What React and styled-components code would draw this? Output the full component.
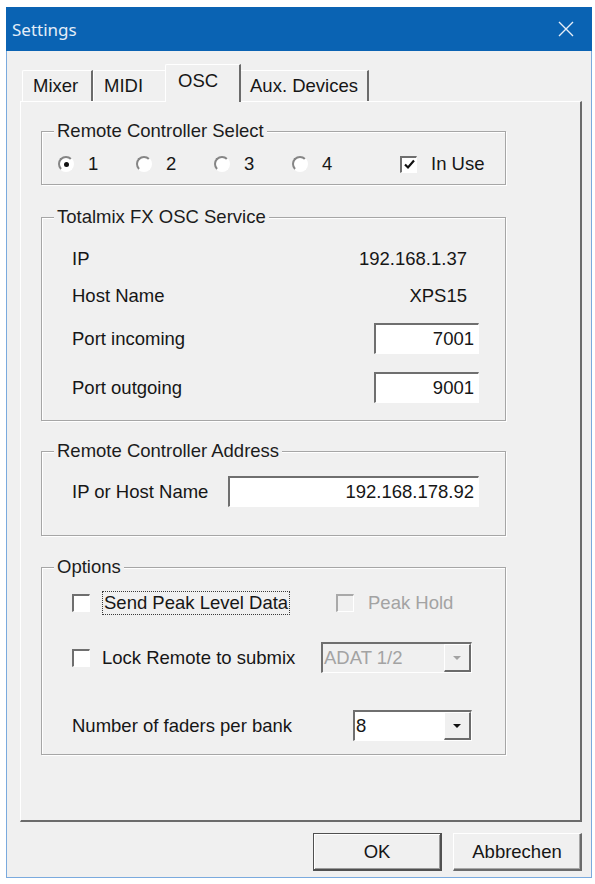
import React from 'react';
import styled, { createGlobalStyle } from 'styled-components';

const GlobalStyle = createGlobalStyle`
  body {
    margin: 0;
    background: #ffffff;
    font-family: 'Liberation Sans', Arial, sans-serif;
    font-size: 18.5px;
    color: #161616;
  }
`;

const Page = styled.div`
  padding: 7px 0 0 6px;
`;

const Window = styled.div`
  box-sizing: border-box;
  width: 586px;
  height: 871px;
  display: flex;
  flex-direction: column;
  background: #f0f0f0;
  border: 1px solid #7aaade;
  border-top: none;
`;

const TitleBar = styled.div`
  height: 44px;
  flex-shrink: 0;
  margin: 0 -1px;
  display: flex;
  align-items: center;
  justify-content: space-between;
  background: #0a63b3;
`;

const Title = styled.span`
  padding-left: 6px;
  font-family: 'Noto Sans', 'Open Sans', sans-serif;
  font-size: 17px;
  color: #e4edf8;
`;

const CloseButton = styled.div`
  width: 50px;
  height: 44px;
  margin-right: 1px;
  display: flex;
  align-items: center;
  justify-content: center;
`;

const TabStrip = styled.div`
  height: 37px;
  flex-shrink: 0;
  margin: 13px 0 0 13px;
  padding-left: 2px;
  display: flex;
  align-items: flex-end;
`;

const Tab = styled.div`
  box-sizing: border-box;
  position: relative;
  width: ${p => p.$width}px;
  height: ${p => (p.$active ? 38 : 31)}px;
  margin: 0 ${p => (p.$active ? -2 : 0)}px ${p => (p.$active ? -1 : 0)}px ${p => (p.$active ? -2 : 0)}px;
  padding: ${p => (p.$active ? '6px 0 0 12px' : '0 0 0 10px')};
  display: flex;
  align-items: ${p => (p.$active ? 'flex-start' : 'center')};
  line-height: 20px;
  background: #f0f0f0;
  border-top: 1px solid #ffffff;
  border-left: 1px solid #ffffff;
  border-right: 2px solid #6b6b6b;
  border-top-left-radius: 2px;
  z-index: ${p => (p.$active ? 1 : 0)};
`;

const Panel = styled.div`
  box-sizing: border-box;
  width: 562px;
  height: 721px;
  flex-shrink: 0;
  margin-left: 13px;
  padding: 19px 0 0 20px;
  border-top: 1px solid #ffffff;
  border-left: 1px solid #ffffff;
  border-right: 2px solid #6b6b6b;
  border-bottom: 2px solid #6b6b6b;
`;

const Group = styled.fieldset`
  box-sizing: border-box;
  width: 465px;
  min-width: 0;
  margin: ${p => p.$top || 0}px 0 0 0;
  padding: 0;
  border: 1px solid #a6a6a6;
  box-shadow: 1px 1px 0 #ffffff, inset 1px 1px 0 #ffffff;
`;

const Legend = styled.legend`
  margin-left: 12px;
  padding: 0 3px;
  line-height: 20px;
  background: #f0f0f0;
  color: #1c1c1c;
`;

const GroupBody = styled.div`
  padding: ${p => p.$pad};
`;

const RadioRow = styled.div`
  height: 20px;
  display: flex;
  align-items: center;
  line-height: 20px;
`;

const RadioItem = styled.label`
  width: 78px;
  display: flex;
  align-items: center;
  gap: 14px;
`;

const RadioDot = styled.span`
  box-sizing: border-box;
  width: 16px;
  height: 16px;
  border-radius: 50%;
  border: 2px solid;
  border-color: #858585 #ffffff #ffffff #858585;
  background: #ffffff;
  display: flex;
  align-items: center;
  justify-content: center;

  &::after {
    content: '';
    display: ${p => (p.$checked ? 'block' : 'none')};
    width: 5px;
    height: 5px;
    border-radius: 50%;
    background: #111111;
  }
`;

const CheckItem = styled.label`
  display: flex;
  align-items: center;
  gap: ${p => p.$gap || 12}px;
  width: ${p => (p.$width ? `${p.$width}px` : 'auto')};
  margin-left: ${p => p.$left || 0}px;
  flex-shrink: 0;
  line-height: 20px;
  color: ${p => (p.$disabled ? '#a3a3a3' : 'inherit')};
`;

const CheckBox = styled.span`
  box-sizing: border-box;
  width: ${p => p.$size || 18}px;
  height: ${p => p.$size || 18}px;
  flex-shrink: 0;
  border-style: solid;
  border-width: 2px 1px 1px 2px;
  border-color: ${p =>
    p.$disabled ? '#a9a9a9 #ffffff #ffffff #a9a9a9' : '#6f6f6f #ffffff #ffffff #6f6f6f'};
  background: ${p => (p.$disabled ? '#f0f0f0' : '#ffffff')};
  display: flex;
  align-items: center;
  justify-content: center;
`;

const FocusText = styled.span`
  padding: 1px 1px;
  border: 1px dotted #3a3a3a;
`;

const InfoRow = styled.div`
  height: 37px;
  display: flex;
  align-items: center;
  justify-content: space-between;
`;

const InfoValue = styled.span`
  padding-right: 12px;
`;

const FieldRow = styled.div`
  height: 31px;
  margin-top: ${p => p.$top || 0}px;
  display: flex;
  align-items: center;
  justify-content: space-between;
`;

const Edit = styled.div`
  box-sizing: border-box;
  width: ${p => p.$width}px;
  height: 31px;
  padding-right: 4px;
  border-style: solid;
  border-width: 2px 1px 1px 2px;
  border-color: #6f6f6f #ffffff #ffffff #6f6f6f;
  background: #ffffff;
  text-align: right;
  line-height: 28px;
`;

const OptionRow = styled.div`
  height: ${p => p.$height}px;
  margin-top: ${p => p.$top || 0}px;
  display: flex;
  align-items: center;
`;

const Combo = styled.div`
  box-sizing: border-box;
  width: ${p => p.$width}px;
  height: 31px;
  display: flex;
  border-style: solid;
  border-width: 2px 1px 1px 2px;
  border-color: #6f6f6f #ffffff #ffffff #6f6f6f;
  background: ${p => (p.$disabled ? '#f0f0f0' : '#ffffff')};
  color: ${p => (p.$disabled ? '#a3a3a3' : 'inherit')};
`;

const ComboText = styled.span`
  flex: 1;
  padding-left: 1px;
  line-height: 28px;
`;

const DropButton = styled.span`
  box-sizing: border-box;
  width: 27px;
  display: flex;
  align-items: center;
  justify-content: center;
  background: #f0f0f0;
  border-style: solid;
  border-width: 1px 2px 2px 1px;
  border-color: #ffffff #6b6b6b #6b6b6b #ffffff;
`;

const Arrow = styled.span`
  width: 0;
  height: 0;
  border-left: 4px solid transparent;
  border-right: 4px solid transparent;
  border-top: 4px solid ${p => (p.$disabled ? '#a3a3a3' : '#111111')};
`;

const ButtonBar = styled.div`
  margin-top: 11px;
  padding-right: 9px;
  display: flex;
  justify-content: flex-end;
  gap: 11px;
`;

const PushButton = styled.div`
  box-sizing: border-box;
  width: 129px;
  height: 38px;
  display: flex;
  align-items: center;
  justify-content: center;
  background: #f0f0f0;
  border-style: solid;
  border-width: ${p => (p.$default ? '1px 2px 2px 1px' : '1px 2px 2px 1px')};
  border-color: ${p =>
    p.$default ? '#505050 #505050 #505050 #505050' : '#ffffff #6b6b6b #6b6b6b #ffffff'};
  box-shadow: ${p =>
    p.$default ? 'inset 1px 1px 0 #ffffff, inset -1px -1px 0 #9a9a9a' : 'inset -1px -1px 0 #a8a8a8'};
`;

const CloseIcon = () => (
  <svg width="16" height="16" viewBox="0 0 16 16">
    <path d="M1 1 L15 15 M15 1 L1 15" stroke="#e6eef8" strokeWidth="1.4" fill="none" />
  </svg>
);

const Tick = () => (
  <svg width="13" height="13" viewBox="0 0 13 13">
    <path d="M2 6.5 L5 9.5 L11 2.5" stroke="#111" strokeWidth="2.2" fill="none" />
  </svg>
);

const tabs = [
  { label: 'Mixer', width: 71 },
  { label: 'MIDI', width: 74 },
  { label: 'OSC', width: 76, active: true },
  { label: 'Aux. Devices', width: 130 },
];

const App = () => {
  return (
    <Page>
      <GlobalStyle />
      <Window>
        <TitleBar>
          <Title>Settings</Title>
          <CloseButton>
            <CloseIcon />
          </CloseButton>
        </TitleBar>

        <TabStrip>
          {tabs.map(t => (
            <Tab key={t.label} $width={t.width} $active={t.active}>
              {t.label}
            </Tab>
          ))}
        </TabStrip>

        <Panel>
          <Group>
            <Legend>Remote Controller Select</Legend>
            <GroupBody $pad="13px 0 10px 16px">
              <RadioRow>
                {[1, 2, 3, 4].map(n => (
                  <RadioItem key={n}>
                    <RadioDot $checked={n === 1} />
                    {n}
                  </RadioItem>
                ))}
                <CheckItem $left={30} $gap={14}>
                  <CheckBox $size={17}>
                    <Tick />
                  </CheckBox>
                  In Use
                </CheckItem>
              </RadioRow>
            </GroupBody>
          </Group>

          <Group $top={22}>
            <Legend>Totalmix FX OSC Service</Legend>
            <GroupBody $pad="13px 26px 17px 30px">
              <InfoRow>
                <span>IP</span>
                <InfoValue>192.168.1.37</InfoValue>
              </InfoRow>
              <InfoRow>
                <span>Host Name</span>
                <InfoValue>XPS15</InfoValue>
              </InfoRow>
              <FieldRow $top={9}>
                <span>Port incoming</span>
                <Edit $width={105}>7001</Edit>
              </FieldRow>
              <FieldRow $top={18}>
                <span>Port outgoing</span>
                <Edit $width={105}>9001</Edit>
              </FieldRow>
            </GroupBody>
          </Group>

          <Group $top={20}>
            <Legend>Remote Controller Address</Legend>
            <GroupBody $pad="15px 26px 28px 30px">
              <FieldRow>
                <span>IP or Host Name</span>
                <Edit $width={251}>192.168.178.92</Edit>
              </FieldRow>
            </GroupBody>
          </Group>

          <Group $top={21}>
            <Legend>Options</Legend>
            <GroupBody $pad="14px 0 13px 30px">
              <OptionRow $height={24}>
                <CheckItem $width={264}>
                  <CheckBox />
                  <FocusText>Send Peak Level Data</FocusText>
                </CheckItem>
                <CheckItem $disabled $gap={14}>
                  <CheckBox $disabled />
                  Peak Hold
                </CheckItem>
              </OptionRow>
              <OptionRow $height={31} $top={27}>
                <CheckItem $width={249}>
                  <CheckBox />
                  Lock Remote to submix
                </CheckItem>
                <Combo $width={151} $disabled>
                  <ComboText>ADAT 1/2</ComboText>
                  <DropButton>
                    <Arrow $disabled />
                  </DropButton>
                </Combo>
              </OptionRow>
              <OptionRow $height={31} $top={37}>
                <CheckItem $width={281}>Number of faders per bank</CheckItem>
                <Combo $width={119}>
                  <ComboText>8</ComboText>
                  <DropButton>
                    <Arrow />
                  </DropButton>
                </Combo>
              </OptionRow>
            </GroupBody>
          </Group>
        </Panel>

        <ButtonBar>
          <PushButton $default>OK</PushButton>
          <PushButton>Abbrechen</PushButton>
        </ButtonBar>
      </Window>
    </Page>
  );
};

export default App;
